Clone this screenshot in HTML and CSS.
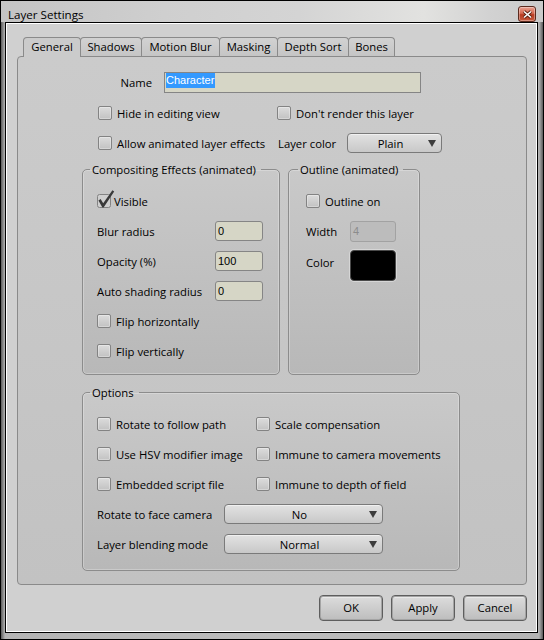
FILE: index.html
```html
<!DOCTYPE html>
<html>
<head>
<meta charset="utf-8">
<title>Layer Settings</title>
<link rel="stylesheet" href="styles.css">
</head>
<body>
<div class="window">
  <div class="titlebar">
    <span class="title">Layer Settings</span>
    <div class="close">
      <svg width="11" height="9" viewBox="0 0 11 9"><path d="M2 1.5 L9 7.5 M9 1.5 L2 7.5" stroke="#5a2010" stroke-width="3.4"/><path d="M2 1.5 L9 7.5 M9 1.5 L2 7.5" stroke="#ffffff" stroke-width="1.6"/></svg>
    </div>
  </div>
  <div class="client">
    <div class="tabs">
      <div class="tab active t-general">General</div>
      <div class="tab t-shadows">Shadows</div>
      <div class="tab t-motion">Motion Blur</div>
      <div class="tab t-masking">Masking</div>
      <div class="tab t-depth">Depth Sort</div>
      <div class="tab t-bones">Bones</div>
    </div>
    <div class="pane">
      <div class="name-row">
        <span class="name-label">Name</span>
        <div class="textfield name-field"><span class="sel">Character</span></div>
      </div>
      <div class="row top-row first">
        <label class="check col-a"><span class="box"></span>Hide in editing view</label>
        <label class="check"><span class="box"></span>Don't render this layer</label>
      </div>
      <div class="row top-row">
        <label class="check col-a"><span class="box"></span>Allow animated layer effects</label>
        <span class="layer-color-label">Layer color</span>
        <div class="combo combo-plain"><span class="combo-text">Plain</span><svg class="arrow" viewBox="0 0 8 7"><path d="M0 0 H8 L4 7 Z" fill="#3c3c3c"/></svg></div>
      </div>
      <div class="groups">
        <fieldset class="group comp">
          <legend>Compositing Effects (animated)</legend>
          <div class="row">
            <label class="check visible">
              <svg class="checkbox-checked" width="14" height="14" viewBox="0 0 14 14" overflow="visible">
                <rect x="0.5" y="0.5" width="13" height="13" rx="2" fill="#cfcfcf" stroke="#838383"/>
                <path d="M1.4 6.4 L3.6 5 L6.2 9.2 L15.4 -3.8 L17.2 -2.4 L6.6 13.4 L5.4 13.4 Z" fill="#3a3a3a"/>
              </svg>Visible</label>
          </div>
          <div class="row"><span class="field-label">Blur radius</span><div class="textfield spin">0</div></div>
          <div class="row"><span class="field-label">Opacity (%)</span><div class="textfield spin">100</div></div>
          <div class="row"><span class="field-label">Auto shading radius</span><div class="textfield spin">0</div></div>
          <div class="row"><label class="check"><span class="box"></span>Flip horizontally</label></div>
          <div class="row"><label class="check"><span class="box"></span>Flip vertically</label></div>
        </fieldset>
        <fieldset class="group outline">
          <legend>Outline (animated)</legend>
          <div class="row"><label class="check"><span class="box"></span>Outline on</label></div>
          <div class="row"><span class="out-label">Width</span><div class="textfield spin disabled">4</div></div>
          <div class="color-row"><span class="out-label color-label">Color</span><div class="swatch"></div></div>
        </fieldset>
      </div>
      <fieldset class="group options">
        <legend>Options</legend>
        <div class="opt-grid">
          <label class="check"><span class="box"></span>Rotate to follow path</label>
          <label class="check"><span class="box"></span>Scale compensation</label>
          <label class="check"><span class="box"></span>Use HSV modifier image</label>
          <label class="check"><span class="box"></span>Immune to camera movements</label>
          <label class="check"><span class="box"></span>Embedded script file</label>
          <label class="check"><span class="box"></span>Immune to depth of field</label>
        </div>
        <div class="row"><span class="opt-label">Rotate to face camera</span><div class="combo combo-wide"><span class="combo-text">No</span><svg class="arrow" viewBox="0 0 8 7"><path d="M0 0 H8 L4 7 Z" fill="#3c3c3c"/></svg></div></div>
        <div class="row"><span class="opt-label">Layer blending mode</span><div class="combo combo-wide"><span class="combo-text">Normal</span><svg class="arrow" viewBox="0 0 8 7"><path d="M0 0 H8 L4 7 Z" fill="#3c3c3c"/></svg></div></div>
      </fieldset>
    </div>
    <div class="buttons">
      <div class="btn">OK</div>
      <div class="btn">Apply</div>
      <div class="btn">Cancel</div>
    </div>
  </div>
</div>
</body>
</html>
```
FILE: styles.css
```css
* { box-sizing: border-box; }
html, body { margin: 0; padding: 0; }
body {
  width: 544px;
  height: 640px;
  overflow: hidden;
  background: #000;
  font-family: "Open Sans", "Liberation Sans", sans-serif;
  font-size: 11.3px;
  line-height: 15px;
  color: #000;
}
.window {
  width: 544px;
  height: 640px;
  border: 1px solid #000;
  background: linear-gradient(90deg, #5a5a5a 0, #b4b4b4 4px, #bdbdbd 50%, #b4b4b4 calc(100% - 4px), #5a5a5a 100%);
  padding: 0 5px 6px 4px;
  display: flex;
  flex-direction: column;
}
.titlebar {
  height: 21px;
  flex: none;
  margin: 0 -5px 0 -4px;
  padding: 6px 0 0 7px;
  display: flex;
  justify-content: space-between;
  align-items: flex-start;
  background: linear-gradient(90deg, #c4c4c4 0%, #cfcfcf 30%, #d4d4d4 55%, #e2e2e0 78%, #d2d2d2 90%, #cacaca 100%);
}
.title { font-size: 11.6px; line-height: 15px; }
.close {
  width: 18px;
  height: 16px;
  margin: -1px 7px 0 0;
  border: 1px solid #5b2a1e;
  border-radius: 3px;
  background: linear-gradient(#e8a090 0%, #d66a52 45%, #b83c22 55%, #c85a3e 100%);
  display: flex;
  align-items: center;
  justify-content: center;
  box-shadow: inset 0 0 0 1px rgba(255,255,255,0.35);
}
.client {
  flex: 1;
  border: 1px solid #000;
  box-shadow: inset 0 0 0 1px #fff;
  background: #d0d0d0;
  padding: 14px 0 0 11px;
  display: flex;
  flex-direction: column;
}
.tabs {
  display: flex;
  align-items: flex-start;
  margin-left: 6px;
  height: 20px;
  position: relative;
  z-index: 1;
}
.tab {
  height: 19px;
  border: 1px solid #8a8a8a;
  border-bottom: none;
  border-radius: 4px 4px 0 0;
  margin-left: -1px;
  background: linear-gradient(#d2d2d2, #c5c5c5);
  text-align: center;
  line-height: 17px;
}
.tab.active {
  height: 20px;
  margin-left: 0;
  background: #cbcbcb;
}
.t-general { width: 58px; }
.t-shadows { width: 62px; }
.t-motion { width: 79px; }
.t-masking { width: 59px; }
.t-depth { width: 72px; }
.t-bones { width: 47px; }
.pane {
  width: 510px;
  height: 529px;
  flex: none;
  margin-top: -1px;
  border: 1px solid #8a8a8a;
  border-radius: 4px;
  background: linear-gradient(#cbcbcb, #c2c2c2);
  padding: 15px 0 0 64px;
}
.name-row { display: flex; height: 21px; }
.name-label { width: 70px; text-align: right; line-height: 21px; margin-right: 12px; }
.textfield {
  font-family: "Liberation Sans", Arial, sans-serif;
  font-size: 11px;
  background: #d6d6c6;
  border: 1px solid #858585;
}
.name-field { width: 257px; height: 21px; padding: 0 0 0 1px; line-height: 15px; }
.sel { display: inline-block; background: #3399ff; color: #fff; line-height: 15px; padding: 0 1px 0 0; }
.row { display: flex; align-items: center; height: 30px; }
.top-row { padding-left: 16px; }
.top-row.first { margin-top: 5px; }
.col-a { width: 179px; }
.check { display: flex; align-items: center; white-space: nowrap; }
.box {
  width: 14px;
  height: 14px;
  flex: none;
  margin-right: 5px;
  border: 1px solid #838383;
  border-radius: 2px;
  background: linear-gradient(#dcdcdc, #c2c2c2);
  box-shadow: inset 0 0 0 1px rgba(255,255,255,0.3);
}
.checkbox-checked { flex: none; margin-right: 3px; }
.layer-color-label { width: 69px; margin-left: 1px; }
.combo {
  display: flex;
  align-items: center;
  height: 20px;
  border: 1px solid #7a7a7a;
  border-radius: 4px;
  background: linear-gradient(#e2e2e2, #c8c8c8);
  padding-left: 5px;
  box-shadow: inset 0 1px 0 rgba(255,255,255,0.5);
}
.combo-plain { width: 95px; }
.combo-wide { width: 159px; }
.combo-text { flex: 1; text-align: center; }
.arrow { width: 8px; height: 7px; margin-right: 5px; flex: none; }
.groups { display: flex; gap: 8px; margin-top: 4px; align-items: stretch; }
fieldset.group {
  margin: 0;
  min-width: 0;
  border: 1px solid #8c8c8c;
  border-radius: 5px;
  background: linear-gradient(#c9c9c9, #b8b8b8);
  box-shadow: inset 0 0 0 1px rgba(255,255,255,0.25);
}
legend { padding: 0 5px 0 2px; margin-left: -7px; line-height: 15px; }
fieldset.comp { width: 198px; padding: 9px 6px 8px 14px; }
fieldset.outline { width: 132px; padding: 9px 5px 8px 17px; }
.outline legend { margin-left: -8px; }
.field-label { width: 118px; }
.spin { width: 48px; height: 20px; border-radius: 3px; padding-left: 2px; line-height: 18px; }
.out-label { width: 44px; }
.spin.disabled { width: 46px; height: 21px; background: #bcbcbc; border-color: #a2a2a2; color: #8c8c8c; line-height: 19px; }
.color-row { display: flex; align-items: flex-start; margin-top: 4px; }
.color-label { margin-top: 5px; }
.swatch {
  width: 46px;
  height: 31px;
  background: #000;
  border: 1px solid #4a4a4a;
  border-radius: 4px;
  box-shadow: 0 0 0 1px #d6d6d6;
}
fieldset.options { width: 378px; margin-top: 10px; padding: 9px 6px 11px 14px; }
.opt-grid { display: grid; grid-template-columns: 159px auto; grid-auto-rows: 30px; align-items: center; }
.opt-label { width: 127px; }
.buttons {
  display: flex;
  justify-content: flex-end;
  gap: 8px;
  margin-top: 10px;
  margin-right: 10px;
}
.btn {
  width: 64px;
  height: 26px;
  border: 1px solid #5e5e5e;
  border-radius: 4px;
  background: linear-gradient(#dddddd, #bdbdbd);
  box-shadow: inset 0 0 0 1px #a4a4a4, inset 0 2px 0 rgba(255,255,255,0.4);
  text-align: center;
  line-height: 24px;
}
```
